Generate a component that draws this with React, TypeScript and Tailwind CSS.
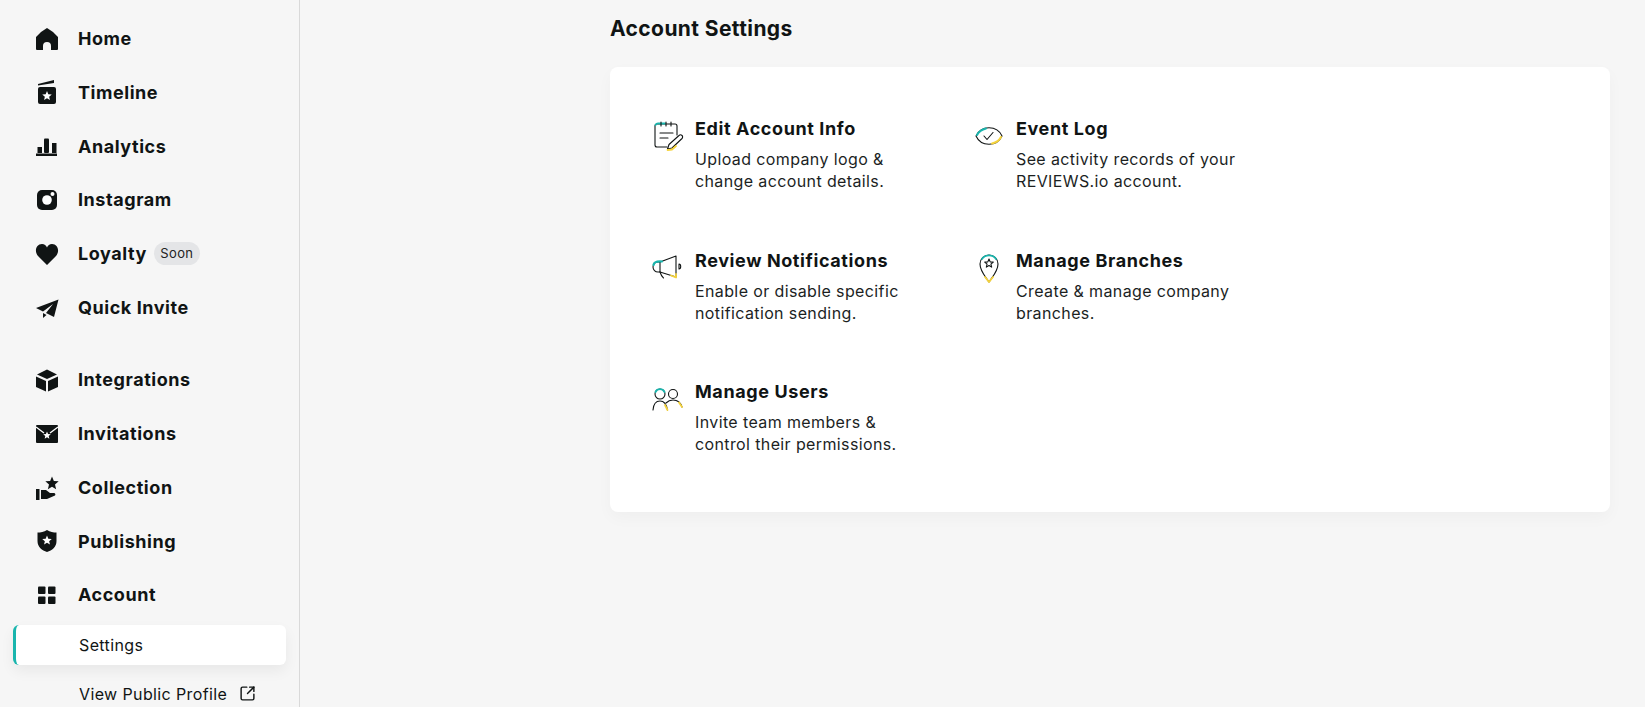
import { ReactNode } from "react";
import { SquareArrowOutUpRight } from "lucide-react";

const FONT = "font-['Inter','Liberation_Sans',sans-serif]";
const INK = "#101414";
const TEAL = "#19b5ad";
const YELLOW = "#f5d33c";

function starPoints(cx: number, cy: number, r: number) {
  const pts: string[] = [];
  for (let i = 0; i < 10; i++) {
    const rad = i % 2 === 0 ? r : r * 0.45;
    const a = -Math.PI / 2 + (i * Math.PI) / 5;
    pts.push(`${(cx + rad * Math.cos(a)).toFixed(2)},${(cy + rad * Math.sin(a)).toFixed(2)}`);
  }
  return pts.join(" ");
}

function Glyph({ children }: { children: ReactNode }) {
  return (
    <svg viewBox="0 0 24 24" fill={INK} className="w-6 h-6 shrink-0 overflow-visible">
      {children}
    </svg>
  );
}

const navTop = [
  {
    label: "Home",
    icon: <path d="M12 1 L18 5 L23 10 V22 a1 1 0 0 1-1 1 H16 V19 a4 4 0 0 0-8 0 V23 H2 a1 1 0 0 1-1-1 V10 L6 5 Z" />,
  },
  {
    label: "Timeline",
    icon: (
      <>
        <path d="M3 3 L19 -1 V2 L3 4.5 Z" />
        <rect x="3" y="6" width="18" height="17" rx="2" />
        <polygon points={starPoints(12, 15, 5)} fill="#fff" />
      </>
    ),
  },
  {
    label: "Analytics",
    icon: (
      <>
        <rect x="2.5" y="13" width="4.5" height="6" />
        <rect x="9" y="4.5" width="5" height="14.5" rx="1" />
        <rect x="17" y="9" width="4.5" height="10" />
        <rect x="1" y="19.5" width="21" height="2.5" />
      </>
    ),
  },
  {
    label: "Instagram",
    icon: (
      <>
        <rect x="2" y="2" width="20" height="20" rx="5" />
        <circle cx="12" cy="12" r="4.8" fill="#fff" />
        <circle cx="17.5" cy="6" r="2" fill="#fff" />
      </>
    ),
  },
  {
    label: "Loyalty",
    soon: true,
    icon: <path d="M12 23 L3 14 C-1 9.5 1 2 7 2 C9.5 2 11 3.5 12 5.5 C13 3.5 14.5 2 17 2 C23 2 25 9.5 21 14 Z" />,
  },
  {
    label: "Quick Invite",
    icon: (
      <>
        <path d="M23.5 4.5 L1 13 L8 16.5 L18 9 L11 18 L19 22 Z" />
        <path d="M8 18 L11.5 20 L8 23 Z" />
      </>
    ),
  },
];

const navBottom = [
  {
    label: "Integrations",
    icon: (
      <>
        <path d="M12 1.5 L22 6.5 L12 11 L2 6.5 Z" />
        <path d="M1 8.5 L11 13 V23.5 L1 19 Z" />
        <path d="M23 8.5 L13 13 V23.5 L23 19 Z" />
      </>
    ),
  },
  {
    label: "Invitations",
    icon: (
      <>
        <rect x="1" y="3" width="22" height="18" rx="1" />
        <path d="M1 5 L9 11 M23 5 L15 11" stroke="#fff" strokeWidth="1.3" fill="none" />
        <polygon points={starPoints(12, 13.5, 4)} fill="#fff" />
      </>
    ),
  },
  {
    label: "Collection",
    icon: (
      <>
        <polygon points={starPoints(17, 8.5, 7)} />
        <rect x="1" y="14" width="3.5" height="11" />
        <path d="M6 15 H11 L15 18 H19 a1.5 1.5 0 0 1 1 2.5 L12 24 H6 Z" />
      </>
    ),
  },
  {
    label: "Publishing",
    icon: (
      <>
        <path d="M12 1 C15 3 18.5 3.5 21.5 3.5 V12 C21.5 18 17 21.5 12 23 C7 21.5 2.5 18 2.5 12 V3.5 C5.5 3.5 9 3 12 1 Z" />
        <polygon points={starPoints(12, 11.5, 5)} fill="#fff" />
      </>
    ),
  },
  {
    label: "Account",
    icon: (
      <>
        <rect x="3" y="3.5" width="7.5" height="7.5" rx="1" />
        <rect x="13" y="3.5" width="7.5" height="7.5" rx="1" />
        <rect x="3" y="13.5" width="7.5" height="7.5" rx="1" />
        <rect x="13" y="13.5" width="7.5" height="7.5" rx="1" />
      </>
    ),
  },
];

function NavRow({ label, icon, soon }: { label: string; icon: ReactNode; soon?: boolean }) {
  return (
    <div className="flex items-center h-[53.7px] pl-[35px]">
      <Glyph>{icon}</Glyph>
      <span className="ml-[19px] text-[18px] font-bold text-[#101414] tracking-[0.55px]">{label}</span>
      {soon && (
        <span className="ml-[7px] flex items-center justify-center w-[46px] h-[23px] rounded-full bg-[#e4e5e7] text-[13px] tracking-[0.4px] text-[#222]">
          Soon
        </span>
      )}
    </div>
  );
}

function LineIcon({ children }: { children: ReactNode }) {
  return (
    <svg
      viewBox="0 0 32 32"
      fill="none"
      stroke={INK}
      strokeWidth="1.1"
      strokeLinecap="round"
      strokeLinejoin="round"
      className="w-8 h-8 shrink-0"
    >
      {children}
    </svg>
  );
}

const settings = [
  {
    title: "Edit Account Info",
    lines: ["Upload company logo &", "change account details."],
    icon: (
      <LineIcon>
        <path d="M15 27 H5 a2 2 0 0 1-2-2 V6 a2 2 0 0 1 2-2 H23 a2 2 0 0 1 2 2 V15" />
        <path d="M3.5 5 a3 3 0 0 1 3-1.5 H13" stroke={TEAL} strokeWidth="1.8" />
        <path d="M9 2 V6 M14 2 V6 M19 2 V6" />
        <path d="M8 13 H21 M8 18 H16" />
        <path d="M15.5 29 L17 24.5 L27 15.5 a2 2 0 0 1 3 3 L20 28 Z" fill="#fff" />
        <path d="M15.5 30 L20 29.5 L24 26" stroke={YELLOW} strokeWidth="1.8" />
      </LineIcon>
    ),
  },
  {
    title: "Event Log",
    lines: ["See activity records of your", "REVIEWS.io account."],
    icon: (
      <LineIcon>
        <path d="M3 16 C8 5 24 5 29 16 C24 27 8 27 3 16 Z" />
        <path d="M4 15 C6 11 9 9.5 13 8.5" stroke={TEAL} strokeWidth="2" />
        <path d="M28 17 C26 21 23 22.5 19 23.5" stroke={YELLOW} strokeWidth="2" />
        <path d="M11 16 L14 19.5 L20 12.5" />
      </LineIcon>
    ),
  },
  {
    title: "Review Notifications",
    lines: ["Enable or disable specific", "notification sending."],
    icon: (
      <LineIcon>
        <path d="M8 10 L24 4 V25 L8 20" />
        <path d="M8 10 H6 a5 5 0 0 0 0 10 H8 Z" />
        <path d="M1.5 13 C2 10 4 9 10 9.5" stroke={TEAL} strokeWidth="2.2" />
        <path d="M19 23.5 L24 25.5 V22" stroke={YELLOW} strokeWidth="1.8" />
        <path d="M8 20 C9 23 10 25 11.5 26" />
        <path d="M27 12 a1.7 2.5 0 0 1 0 5 Z" />
      </LineIcon>
    ),
  },
  {
    title: "Manage Branches",
    lines: ["Create & manage company", "branches."],
    icon: (
      <LineIcon>
        <path d="M16 30 C12 24 7 19 7 12 a9 9 0 0 1 18 0 C25 19 20 24 16 30 Z" />
        <path d="M9 7 a8.5 8.5 0 0 1 14 0" stroke={TEAL} strokeWidth="1.8" />
        <path d="M12 25 L16 30 L20 25" stroke={YELLOW} strokeWidth="1.8" />
        <polygon points={starPoints(16, 11.5, 4.5)} />
      </LineIcon>
    ),
  },
  {
    title: "Manage Users",
    lines: ["Invite team members &", "control their permissions."],
    icon: (
      <LineIcon>
        <circle cx="8" cy="11" r="5" />
        <circle cx="21" cy="11" r="4.5" />
        <path d="M3.5 9 a5 5 0 0 1 9 0" stroke={TEAL} strokeWidth="1.8" />
        <path d="M1 27 C1.5 21 4 18 8 18 C12 18 14.5 21 15.5 27" />
        <path d="M14 20 C16 18 18.5 17 21 17 C25 17 28.5 19 30 24" />
        <path d="M13 22 L15.5 27 M27 19.5 L30 24" stroke={YELLOW} strokeWidth="1.8" />
      </LineIcon>
    ),
  },
];

export default function App() {
  return (
    <div className={`${FONT} flex h-screen overflow-hidden bg-[#f6f6f6] text-[#101414]`}>
      <aside className="w-[300px] shrink-0 border-r border-[#d9d9d9] pt-3">
        <div className="mb-[19px]">
          {navTop.map((item) => (
            <NavRow key={item.label} {...item} />
          ))}
        </div>
        {navBottom.map((item) => (
          <NavRow key={item.label} {...item} />
        ))}
        <div className="mt-[3px] ml-[13px] mr-[13px] flex items-center h-10 rounded-md bg-white border-l-[3px] border-[#19b5ad] pl-[63px] text-[16px] tracking-[0.38px] shadow-[0_6px_14px_rgba(0,0,0,0.06)]">
          Settings
        </div>
        <div className="mt-[9px] pl-[79px] flex items-center h-10 text-[16px] tracking-[0.38px]">
          View Public Profile
          <SquareArrowOutUpRight size={17} strokeWidth={2} className="ml-[12px]" />
        </div>
      </aside>
      <main className="flex-1 pl-[310px] pr-[35px]">
        <h1 className="h-[67px] pt-4 text-[21px] leading-[26px] font-bold tracking-[0.4px]">Account Settings</h1>
        <section className="h-[445px] rounded-lg bg-white pl-[42px] pt-[49px] shadow-[0_6px_16px_rgba(0,0,0,0.03)]">
          <div className="grid grid-cols-[321px_321px] auto-rows-[131.5px]">
            {settings.map((s) => (
              <div key={s.title} className="flex">
                <div className="w-[43px] shrink-0 mt-[4px]">{s.icon}</div>
                <div>
                  <h2 className="text-[18px] leading-[26px] font-bold tracking-[0.6px]">{s.title}</h2>
                  <p className="mt-[6px] text-[16px] leading-[22px] tracking-[0.38px] text-[#1c1f1f]">
                    {s.lines[0]}
                    <br />
                    {s.lines[1]}
                  </p>
                </div>
              </div>
            ))}
          </div>
        </section>
      </main>
    </div>
  );
}
